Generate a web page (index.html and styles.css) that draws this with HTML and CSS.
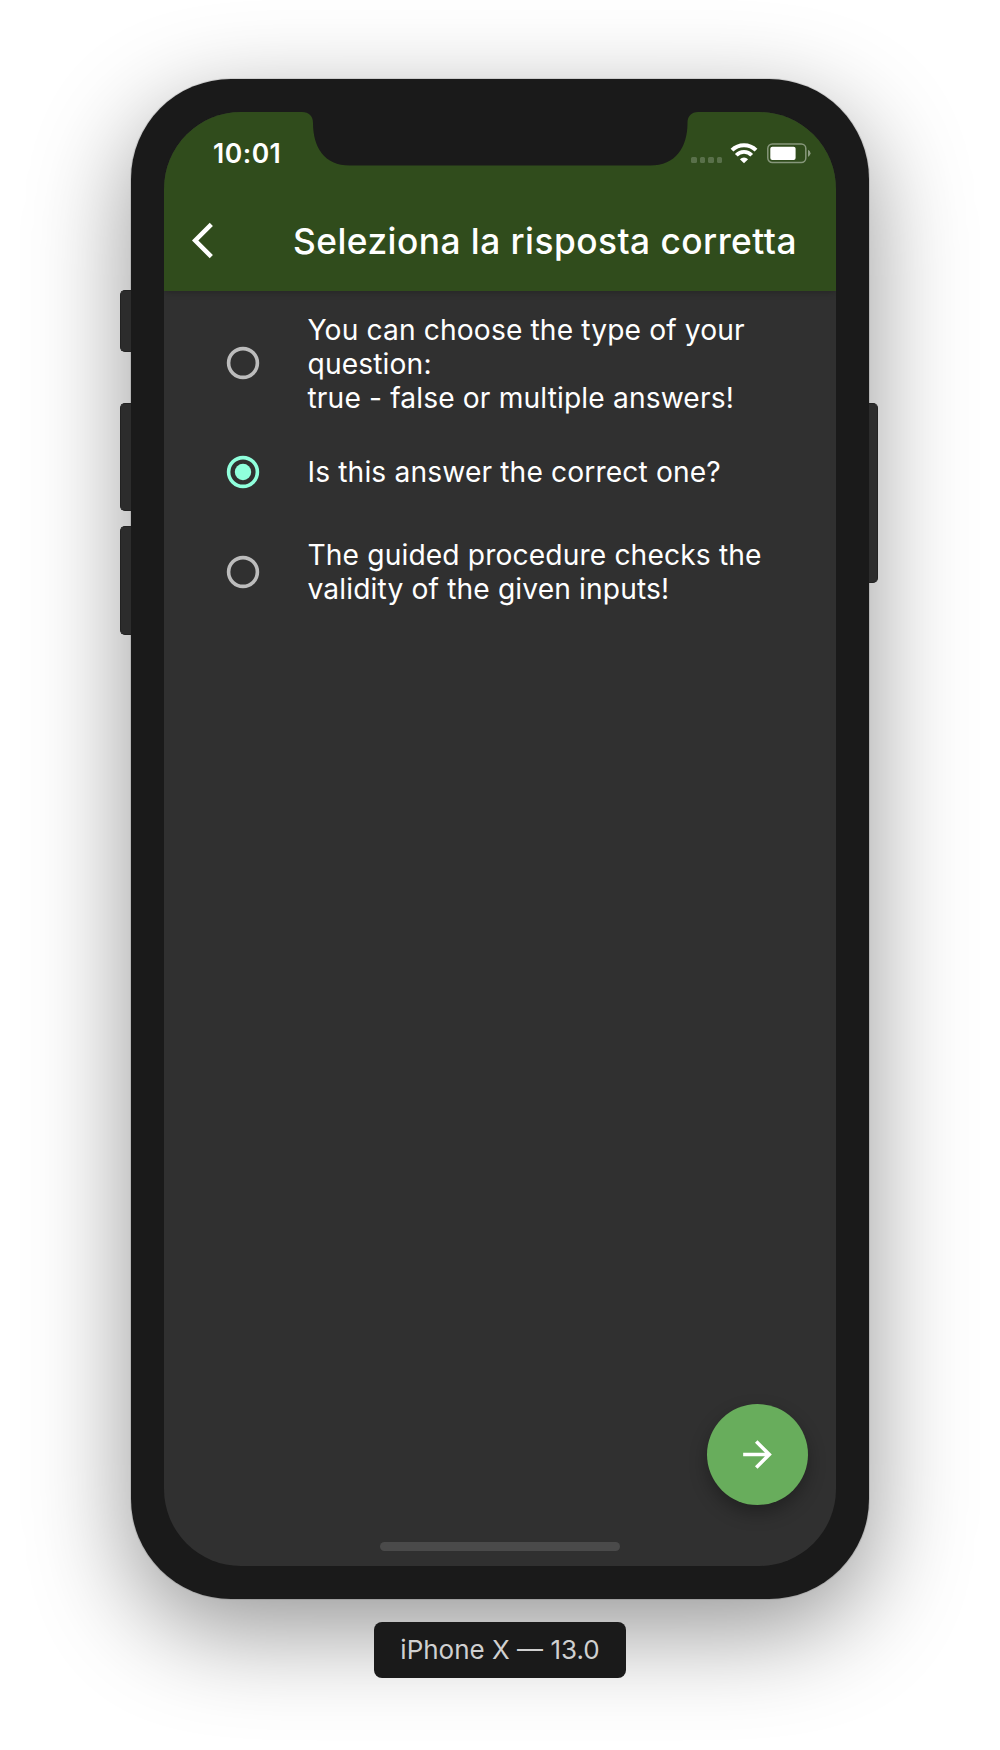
FILE: index.html
```html
<!DOCTYPE html>
<html lang="it">
<head>
<meta charset="utf-8">
<title>Seleziona la risposta corretta</title>
<link rel="stylesheet" href="styles.css">
</head>
<body>
<main class="stage">
  <div class="phone">
    <span class="key key-mute"></span>
    <span class="key key-up"></span>
    <span class="key key-down"></span>
    <span class="key key-power"></span>
    <div class="screen">
      <svg class="notch" width="396" height="54" viewBox="0 0 396 54" aria-hidden="true"><path d="M0 0C7 0 11 4 11 11C11 35 22 53.500 48 53.500H348C374 53.500 385.500 35 385.500 11C385.500 4 389.500 0 396 0Z" fill="#1a1a1a"/></svg>
      <header class="top">
        <div class="status">
          <span class="time">10:01</span>
          <div class="indicators">
            <span class="dots"><i></i><i></i><i></i><i></i></span>
            <svg class="wifi" width="28" height="21" viewBox="0 0 28 21" fill="none" aria-hidden="true"><path d="M2 7.200A17 17 0 0 1 26 7.200" stroke="#fff" stroke-width="4"/><path d="M6.300 12.200A10.600 10.600 0 0 1 21.700 12.200" stroke="#fff" stroke-width="3.800"/><path d="M14 20.300L9.900 16.200A5.900 5.900 0 0 1 18.100 16.200Z" fill="#fff"/></svg>
            <svg class="battery" width="44" height="21" viewBox="0 0 44 21" aria-hidden="true"><rect x=".8" y="1" width="38" height="18.600" rx="4.500" fill="none" stroke="#fff" stroke-opacity=".42" stroke-width="1.500"/><rect x="3.300" y="3.700" width="25.300" height="13.200" rx="2" fill="#fff"/><path d="M41 6.700Q43.500 8 43.500 10.300Q43.500 12.700 41 13.900Z" fill="#fff" fill-opacity=".45"/></svg>
          </div>
        </div>
        <div class="appbar">
          <svg class="back" width="43" height="43" viewBox="0 0 24 24" aria-hidden="true"><path d="M11.670 3.870L9.900 2.100 0 12l9.900 9.900 1.770-1.770L3.540 12z" fill="#fff"/></svg>
          <h1 class="title">Seleziona la risposta corretta</h1>
        </div>
      </header>
      <ul class="answers">
        <li class="answer three-line"><svg class="radio" width="34" height="34" viewBox="0 0 34 34"><circle class="ring" cx="17" cy="17" r="14.400"/></svg><p>You can choose the type of your<br>question:<br>true - false or multiple answers!</p></li>
        <li class="answer one-line"><svg class="radio checked" width="34" height="34" viewBox="0 0 34 34"><circle class="ring" cx="17" cy="17" r="14.400"/><circle class="dot" cx="17" cy="17" r="8.200"/></svg><p>Is this answer the correct one?</p></li>
        <li class="answer two-line"><svg class="radio" width="34" height="34" viewBox="0 0 34 34"><circle class="ring" cx="17" cy="17" r="14.400"/></svg><p>The guided procedure checks the<br>validity of the given inputs!</p></li>
      </ul>
      <footer class="bottom">
        <button class="fab" aria-label="Avanti"><svg width="43" height="43" viewBox="0 0 24 24" aria-hidden="true"><path d="M12 4l-1.410 1.410L16.170 11H4v2h12.170l-5.580 5.590L12 20l8-8z" fill="#fff"/></svg></button>
        <div class="home"></div>
      </footer>
    </div>
  </div>
  <div class="device"><span>iPhone X — 13.0</span></div>
</main>
</body>
</html>
```
FILE: styles.css
```css
* { box-sizing: border-box; margin: 0; padding: 0; }
body { background: #fff; font-family: Inter, "Liberation Sans", sans-serif; }
.stage { width: 1000px; height: 1750px; padding-top: 79px; display: flex; flex-direction: column; align-items: center; gap: 23px; overflow: hidden; }
.phone { position: relative; flex: none; width: 738px; height: 1520px; padding: 33px; border-radius: 100px; background: #1a1a1a; box-shadow: 0 0 0 1px rgba(0,0,0,.1), 0 31px 100px rgba(0,0,0,.42); }
.key { position: absolute; left: -11px; width: 11px; background: #2c2c2c; border: 1px solid #222; border-right: 0; border-radius: 5px 0 0 5px; }
.key-mute { top: 211px; height: 62px; }
.key-up { top: 324px; height: 108px; }
.key-down { top: 447px; height: 109px; }
.key-power { left: auto; right: -9px; width: 9px; top: 324px; height: 180px; border-right: 1px solid #222; border-left: 0; border-radius: 0 5px 5px 0; }
.screen { position: relative; width: 672px; height: 1454px; border-radius: 77px; overflow: hidden; background: #303030; display: flex; flex-direction: column; }
.notch { position: absolute; left: 138px; top: 0; z-index: 2; }
.top { flex: none; height: 179px; background: #304c1c; color: #fff; box-shadow: 0 1px 7px rgba(0,0,0,.25); }
.status { height: 79px; padding: 26px 25px 0 49px; display: flex; justify-content: space-between; align-items: flex-start; }
.time { font-size: 26.5px; line-height: 31px; font-weight: 600; letter-spacing: .5px; }
.indicators { display: flex; align-items: flex-start; padding-top: 5px; }
.dots { display: flex; gap: 3px; padding-top: 14px; margin-right: 8px; }
.dots i { width: 5.4px; height: 5.6px; border-radius: 1.5px; background: #59704a; }
.wifi { margin-right: 9px; }
.appbar { height: 99px; display: flex; align-items: center; padding-left: 28px; }
.back { flex: none; }
.title { margin-left: 58px; padding-top: 1px; font-size: 35.3px; line-height: 43px; font-weight: 500; letter-spacing: .46px; white-space: nowrap; }
.answers { flex: 1; list-style: none; color: #fff; font-size: 28.2px; line-height: 34px; letter-spacing: .13px; }
.answer { display: flex; align-items: center; padding-left: 62px; gap: 47.5px; white-space: nowrap; }
.three-line { height: 144px; }
.three-line p { padding-top: 2px; }
.one-line { height: 74px; }
.two-line { height: 126px; }
.radio { flex: none; }
.ring { fill: none; stroke: #bcbcbc; stroke-width: 3.6px; }
.checked .ring { stroke: #90ffdc; }
.dot { fill: #90ffdc; }
.bottom { height: 162px; display: flex; flex-direction: column; align-items: center; }
.fab { align-self: flex-end; margin-right: 28px; width: 101px; height: 101px; border: 0; border-radius: 50%; background: #68ad5c; display: flex; align-items: center; justify-content: center; box-shadow: 0 8px 18px rgba(0,0,0,.3); }
.home { margin-top: 37px; width: 240px; height: 9px; border-radius: 5px; background: #4a4a4a; }
.device { flex: none; position: relative; width: 252px; height: 56px; border-radius: 8px; background: #1a1a1a; color: #d0d0d0; font-size: 26px; line-height: 56px; font-weight: 420; text-align: center; white-space: nowrap; }
```
